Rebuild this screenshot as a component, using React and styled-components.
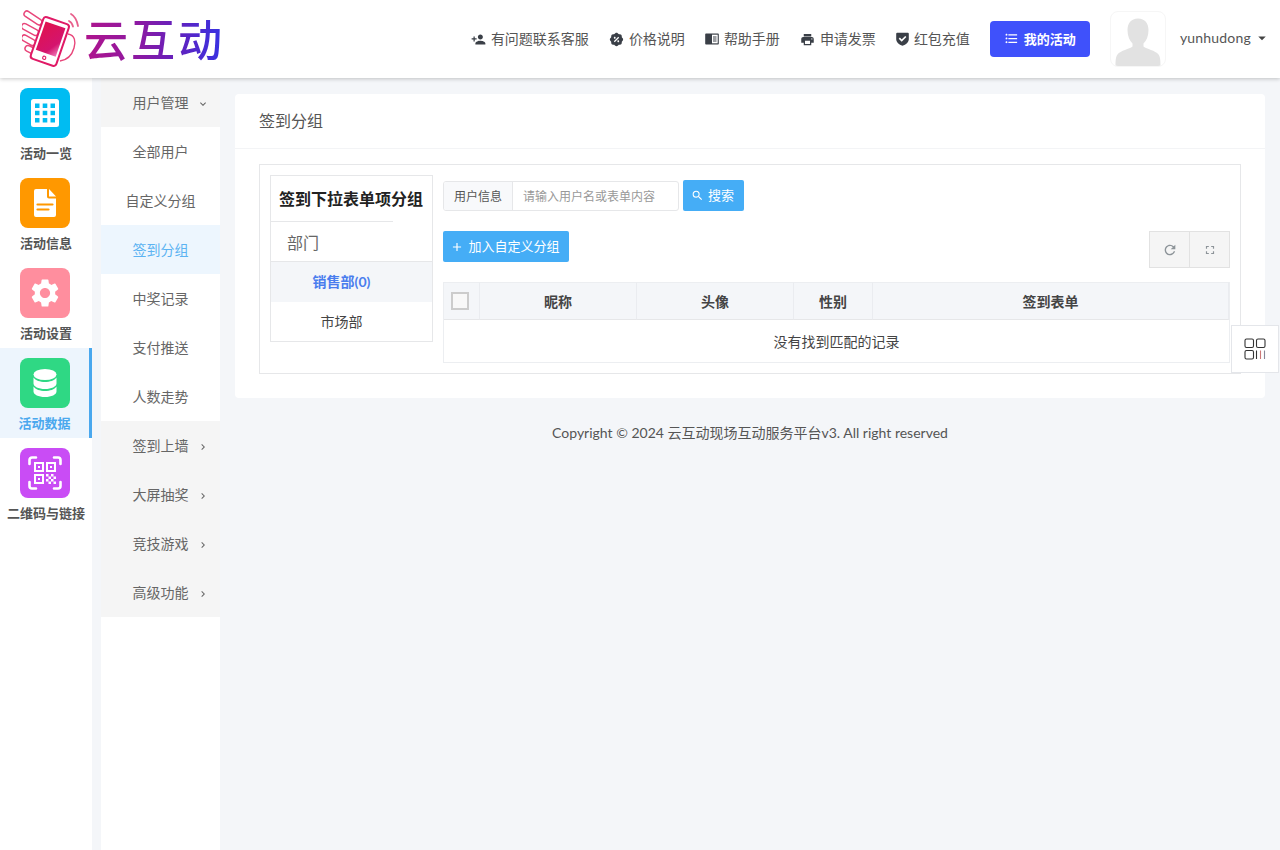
import React from "react";
import styled, { createGlobalStyle } from "styled-components";
import { MdPersonAdd, MdPrint, MdFormatListBulleted, MdSearch, MdRefresh, MdFullscreen, MdArrowDropDown, MdKeyboardArrowDown, MdKeyboardArrowRight, MdAdd, MdSettings } from "react-icons/md";
import { RiDiscountPercentFill } from "react-icons/ri";

const font = `Lato, "Noto Sans CJK SC", sans-serif`;
const Global = createGlobalStyle`
  html, body { margin: 0; padding: 0; background: #f4f6f9; height: 100%; }
  * { box-sizing: border-box; }
  body { font-family: ${font}; color: #555; font-size: 14px; overflow: hidden; }
`;
const Page = styled.div`width: 1280px; height: 850px; position: relative; display: flex; flex-direction: column; overflow: hidden;`;
const Header = styled.header`height: 78px; flex: none; background: #fff; display: flex; align-items: center; padding: 0 9px 0 22px; box-shadow: 0 1px 4px rgba(0,0,0,.22); position: relative; z-index: 2;`;
const Logo = styled.div`display: flex; align-items: center; gap: 4px; flex: none;`;
const LogoText = styled.span`
  font: 500 44px/50px "Noto Sans CJK SC", sans-serif; letter-spacing: 3px; display: block; width: 142px; white-space: nowrap;
  background: linear-gradient(90deg, #b0148c 0%, #8a1aa4 40%, #5f22c0 68%, #3434e6 100%);
  -webkit-background-clip: text; background-clip: text; color: transparent; transform: translateY(-1px);
`;
const HeaderNav = styled.nav`margin-left: auto; display: flex; align-items: center; gap: 20px;`;
const NavLink = styled.a`display: flex; align-items: center; gap: 5px; color: #555; font-size: 14px; line-height: 20px; white-space: nowrap; svg { flex: none; color: #3a3f47; }`;
const MyButton = styled.button`width: 100px; height: 36px; border: 0; border-radius: 4px; background: #3f51fb; color: #fff; font: 700 13px ${font}; display: flex; align-items: center; justify-content: center; gap: 5px; padding: 0 0 2px;`;
const Avatar = styled.div`width: 56px; height: 56px; border: 1px solid #f6f6f6; border-radius: 8px; background: #fff; overflow: hidden; display: flex;`;
const User = styled.div`display: flex; align-items: center; gap: 2px; margin-left: -6px; padding-bottom: 3px; font-size: 14px; color: #555; letter-spacing: .2px;`;

const Body = styled.div`flex: 1; display: flex; min-height: 0;`;
const Rail = styled.aside`width: 92px; flex: none; background: #fff; display: flex; flex-direction: column;`;
const RailItem = styled.div`
  height: 90px; padding: 10px ${p => p.$active ? "0 0 1px" : "2px 0 0"}; display: flex; flex-direction: column; align-items: center; gap: 5px;
  background: ${p => p.$active ? "#edf5fd" : "transparent"};
  border-right: ${p => p.$active ? "3px solid #4aa8ee" : "0"};
`;
const RailIcon = styled.div`width: 50px; height: 50px; border-radius: 8px; background: ${p => p.$color}; display: flex; align-items: center; justify-content: center; color: #fff; flex: none;`;
const RailLabel = styled.div`font-size: 13px; line-height: 20px; font-weight: 700; white-space: nowrap; margin-left: ${p => p.$active ? "-1px" : "2px"}; color: ${p => p.$active ? "#4aa8ee" : "#555"};`;
const SubMenu = styled.aside`width: 119px; flex: none; margin-left: 9px; background: #fff;`;
const SubGroup = styled.div`height: 49px; padding-bottom: 2px; background: #f5f5f5; display: flex; align-items: center; justify-content: center; position: relative; font-size: 14px; color: #666; svg { position: absolute; right: 11px; top: 20px; color: #666; }`;
const SubItem = styled.div`height: 49px; padding-bottom: 2px; display: flex; align-items: center; justify-content: center; font-size: 14px; color: ${p => p.$active ? "#5cb3f2" : "#666"}; background: ${p => p.$active ? "#edf6fe" : "#fff"};`;

const Main = styled.main`flex: 1; padding: 16px 15px 0 15px; min-width: 0;`;
const Card = styled.section`background: #fff; border-radius: 4px; height: 304px; display: flex; flex-direction: column;`;
const CardHead = styled.div`height: 55px; flex: none; padding: 0 24px 2px; display: flex; align-items: center; font-size: 16px; color: #555; border-bottom: 1px solid #f3f4f6;`;
const CardBody = styled.div`padding: 15px 24px 0;`;
const Frame = styled.div`height: 210px; border: 1px solid #e6e7e9; padding: 10px; display: flex; gap: 10px;`;
const GroupPanel = styled.div`width: 163px; height: 167px; flex: none; border: 1px solid #e6e7e9; display: flex; flex-direction: column;`;
const GroupTitle = styled.div`height: 46px; flex: none; padding: 0 8px 2px; display: flex; align-items: center; font-size: 16px; font-weight: 700; color: #222; white-space: nowrap; position: relative; &::after { content: ""; position: absolute; left: 0; bottom: 0; width: 122px; height: 1px; background: #e6e7e9; }`;
const GroupName = styled.div`height: 40px; flex: none; padding-left: 16px; display: flex; align-items: center; font-size: 16px; color: #666; border-bottom: 1px solid #e6e7e9;`;
const GroupRow = styled.div`height: 40px; flex: none; padding: 0 20px 2px 0; display: flex; align-items: center; justify-content: center; font-size: 14px; ${p => p.$active ? "background:#f4f6f9;color:#4a7dee;font-weight:700;" : "color:#444;"}`;

const Right = styled.div`flex: 1; min-width: 0; display: flex; flex-direction: column;`;
const SearchRow = styled.div`display: flex; align-items: center; gap: 4px; margin-top: 5px; height: 31px;`;
const InputGroup = styled.div`display: flex; width: 236px; height: 30px; border: 1px solid #e6e7e9; border-radius: 3px; overflow: hidden; font-size: 12px;`;
const Addon = styled.div`width: 69px; flex: none; background: #f8f9fb; border-right: 1px solid #e6e7e9; color: #555; display: flex; align-items: center; justify-content: center;`;
const Placeholder = styled.div`padding-left: 10px; color: #999; display: flex; align-items: center; white-space: nowrap;`;
const BlueButton = styled.button`height: 31px; border: 0; border-radius: 2px; background: #45adf6; color: #fff; font: 13px ${font}; display: flex; align-items: center; justify-content: center; gap: 4px; padding: 0 2px 2px 0; width: ${p => p.$w}px; flex: none; svg { margin-top: 2px; }`;
const ActionRow = styled.div`display: flex; align-items: flex-start; justify-content: space-between; margin-top: 20px; height: 51px;`;
const ToolGroup = styled.div`display: flex; height: 37px;`;
const ToolButton = styled.div`width: 41px; height: 37px; background: #f5f5f5; border: 1px solid #e2e2e2; margin-left: ${p => p.$joined ? "-1px" : 0}; display: flex; align-items: center; justify-content: center; color: #8d9499;`;
const Table = styled.div`border: 1px solid #eceef1; border-top: 0; display: grid; grid-template-columns: 36px 157px 157px 79px 1fr;`;
const Th = styled.div`height: 38px; background: #f4f6f9; border-right: 1px solid #eaecf0; border-bottom: 1px solid #e6e7e9; border-top: 1px solid #eceef1; display: flex; align-items: center; justify-content: center; font-size: 14px; font-weight: 700; color: #444; &:last-of-type { border-right: 0; }`;
const Check = styled.span`width: 18px; height: 18px; margin-right: 3px; border: 2px solid #ccc; background: #f8f8f8; display: block;`;
const Empty = styled.div`grid-column: 1 / -1; height: 42px; display: flex; align-items: center; justify-content: center; font-size: 14px; color: #444;`;
const Footer = styled.footer`margin-top: 24px; text-align: center; font-size: 14px; line-height: 22px; color: #555;`;
const Widget = styled.div`position: absolute; left: 1231px; top: 325px; width: 48px; height: 48px; background: #fff; border: 1px solid #e4e6ea; display: flex; align-items: center; justify-content: center; z-index: 3;`;

const fingers = "M5 4 17 12M2.500 16.500l11 6M2.500 28l8 4.500M6 38.500l4 2";
const Phone = () => (
  <svg width="58" height="58" viewBox="0 0 58 58" fill="none">
    <defs><linearGradient id="ph" x1="0" y1="0" x2="1" y2="1"><stop offset="0" stopColor="#e0124e"/><stop offset=".72" stopColor="#d4146e"/><stop offset="1" stopColor="#f07ab8"/></linearGradient></defs>
    <g strokeLinecap="round">
      <path d={fingers} stroke="#e8467a" strokeWidth="7.400"/>
      <path d={fingers} stroke="#fff" strokeWidth="4.400"/>
    </g>
    <path d="M46 24c7 1 8 8 6 14-2 7-7 12-14 13" stroke="#e8467a" strokeWidth="1.400"/>
    <g transform="rotate(19 28 31)">
      <rect x="14.500" y="9.500" width="27" height="44" rx="3" fill="#fff" stroke="#e01a66" strokeWidth="2"/>
      <rect x="17.500" y="14" width="21" height="30" fill="url(#ph)"/>
      <circle cx="28" cy="48.800" r="1.600" stroke="#e01a66" strokeWidth="1.100"/>
    </g>
    <path d="M47 11c2 1 3.500 3 4 5.500M49 4c3.500 2 6 6.500 7 12" stroke="#e8608c" strokeWidth="1.800" strokeLinecap="round"/>
  </svg>
);
const BookIcon = () => (
  <svg width="14" height="14" viewBox="0 0 14 14"><path d="M1 1.500h12a.8.8 0 0 1 .8.8v9.400a.8.8 0 0 1-.8.8H1a.8.8 0 0 1-.8-.8V2.300a.8.8 0 0 1 .8-.8z" fill="#3a3f47"/><rect x="7" y="2.700" width="5.700" height="8.600" fill="#fff"/><path d="M8 5h3.500M8 7h3.500M8 9h3.500" stroke="#3a3f47" strokeWidth="1"/></svg>
);
const ShieldIcon = () => (
  <svg width="13" height="14" viewBox="0 0 13 14"><path d="M1.200.8h10.600a1 1 0 0 1 1 1v5.400c0 3-2.800 5.300-6.300 6.500C3 12.500.2 10.200.2 7.200V1.800a1 1 0 0 1 1-1z" fill="#3a3f47"/><path d="M3.300 6.200 5.700 8.600 9.800 4.500" stroke="#fff" strokeWidth="1.700" fill="none"/></svg>
);
const Silhouette = () => (
  <svg width="54" height="54" viewBox="0 0 54 54"><path d="M27 6.500c7 0 10.500 5 10.500 11.500 0 6-2 10.500-5 13.500v3c3 2.500 12 4 15 8 1.500 2 2 5 2 11.500H4.500c0-6.500.5-9.500 2-11.500 3-4 12-5.500 15-8v-3c-3-3-5-7.500-5-13.500C16.500 11.500 20 6.500 27 6.500z" fill="#e2e2e2"/></svg>
);
const GridIcon = () => (
  <svg width="28" height="28" viewBox="0 0 28 28"><path fillRule="evenodd" fill="#fff" d="M2.500 0h23A2.500 2.500 0 0 1 28 2.500v23a2.500 2.500 0 0 1-2.500 2.500h-23A2.500 2.500 0 0 1 0 25.500v-23A2.500 2.500 0 0 1 2.500 0zM4 4.500v4.500h4.500V4.500zm7.700 0v4.500h4.600V4.500zm7.800 0v4.500H24V4.500zM4 11.700v4.600h4.500v-4.600zm7.700 0v4.600h4.600v-4.600zm7.800 0v4.600H24v-4.600zM4 19v4.500h4.500V19zm7.700 0v4.500h4.600V19zm7.800 0v4.500H24V19z"/></svg>
);
const DocIcon = () => (
  <svg width="22" height="28" viewBox="0 0 22 28"><path fill="#fff" d="M2 0h11v7.500c0 1 .8 2 2 2h7V26a2 2 0 0 1-2 2H2a2 2 0 0 1-2-2V2a2 2 0 0 1 2-2z"/><path fill="#fff" d="M15 0l7 7.500h-7z"/><path d="M3.500 15.500h15M3.500 20.500h11" stroke="#ff9800" strokeWidth="2.200" strokeLinecap="round"/></svg>
);
const DbIcon = () => (
  <svg width="24" height="28" viewBox="0 0 24 28"><ellipse cx="12" cy="5.500" rx="11.500" ry="5.500" fill="#fff"/><path fill="#fff" d="M.5 8.500c2 3 6.500 4.500 11.500 4.500s9.500-1.500 11.500-4.500v6c0 3-5 5.500-11.500 5.500S.5 17.500.5 14.500z"/><path fill="#fff" d="M.5 17.500c2 3 6.500 4.500 11.500 4.500s9.500-1.500 11.500-4.500v5c0 3-5 5.500-11.500 5.500S.5 25.500.5 22.500z"/></svg>
);
const QrIcon = () => (
  <svg width="34" height="34" viewBox="0 0 34 34" fill="none">
    <path d="M1.500 8V4a2.500 2.500 0 0 1 2.500-2.500h4M26 1.500h4A2.500 2.500 0 0 1 32.500 4v4M1.500 26v4A2.500 2.500 0 0 0 4 32.500h4M26 32.500h4a2.500 2.500 0 0 0 2.500-2.500v-4" stroke="#fff" strokeWidth="2.600" strokeLinecap="round"/>
    <path fillRule="evenodd" fill="#fff" d="M6 6h10v10H6zm2 2v6h6V8zm2 2h2v2h-2zM18 6h10v10H18zm2 2v6h6V8zm2 2h2v2h-2zM6 18h10v10H6zm2 2v6h6v-6zm2 2h2v2h-2zM18 18h2.500v2.500H18zM23 18h2.500v2.500H23zM20.500 20.500H23V23h-2.500zM25.500 20.500H28V23h-2.500zM18 23h2.500v2.500H18zM23 23h2.500v2.500H23zM20.500 25.500H23V28h-2.500zM25.500 25.500H28V28h-2.500z"/>
  </svg>
);
const WidgetIcon = () => (
  <svg width="22" height="22" viewBox="0 0 22 22" fill="none" stroke="#333" strokeWidth="1.100">
    <rect x="1" y="1" width="8.500" height="8.500" rx="1.500"/><rect x="12.500" y="1" width="8.500" height="8.500" rx="1.500"/><rect x="1" y="12.500" width="8.500" height="8.500" rx="1.500"/>
    <path d="M12.500 12.500v8.500" stroke="#333"/><path d="M16.500 12.500v8.500" stroke="#c77"/><path d="M20.500 12.500v8.500" stroke="#889"/>
  </svg>
);

const rail = [
  { label: "活动一览", color: "#00bcf2", icon: <GridIcon /> },
  { label: "活动信息", color: "#ff9800", icon: <DocIcon /> },
  { label: "活动设置", color: "#ff8e9e", icon: <MdSettings size={34} /> },
  { label: "活动数据", color: "#2fd884", icon: <DbIcon />, active: true },
  { label: "二维码与链接", color: "#c94cf5", icon: <QrIcon /> },
];
const sub = ["全部用户", "自定义分组", "签到分组", "中奖记录", "支付推送", "人数走势"];
const groups = ["签到上墙", "大屏抽奖", "竞技游戏", "高级功能"];

export default function App() {
  return (
    <Page>
      <Global />
      <Header>
        <Logo><Phone /><LogoText>云互动</LogoText></Logo>
        <HeaderNav>
          <NavLink><MdPersonAdd size={15} />有问题联系客服</NavLink>
          <NavLink><RiDiscountPercentFill size={15} />价格说明</NavLink>
          <NavLink><BookIcon />帮助手册</NavLink>
          <NavLink><MdPrint size={15} />申请发票</NavLink>
          <NavLink><ShieldIcon />红包充值</NavLink>
          <MyButton><MdFormatListBulleted size={15} />我的活动</MyButton>
          <Avatar><Silhouette /></Avatar>
          <User>yunhudong<MdArrowDropDown size={18} color="#444" /></User>
        </HeaderNav>
      </Header>
      <Body>
        <Rail>
          {rail.map(r => (
            <RailItem key={r.label} $active={r.active}>
              <RailIcon $color={r.color}>{r.icon}</RailIcon>
              <RailLabel $active={r.active}>{r.label}</RailLabel>
            </RailItem>
          ))}
        </Rail>
        <SubMenu>
          <SubGroup>用户管理<MdKeyboardArrowDown size={12} /></SubGroup>
          {sub.map(s => <SubItem key={s} $active={s === "签到分组"}>{s}</SubItem>)}
          {groups.map(g => <SubGroup key={g}>{g}<MdKeyboardArrowRight size={12} /></SubGroup>)}
        </SubMenu>
        <Main>
          <Card>
            <CardHead>签到分组</CardHead>
            <CardBody>
              <Frame>
                <GroupPanel>
                  <GroupTitle>签到下拉表单项分组</GroupTitle>
                  <GroupName>部门</GroupName>
                  <GroupRow $active>销售部(0)</GroupRow>
                  <GroupRow>市场部</GroupRow>
                </GroupPanel>
                <Right>
                  <SearchRow>
                    <InputGroup>
                      <Addon>用户信息</Addon>
                      <Placeholder>请输入用户名或表单内容</Placeholder>
                    </InputGroup>
                    <BlueButton $w={61}><MdSearch size={13} />搜索</BlueButton>
                  </SearchRow>
                  <ActionRow>
                    <BlueButton $w={126}><MdAdd size={14} />加入自定义分组</BlueButton>
                    <ToolGroup>
                      <ToolButton><MdRefresh size={16} /></ToolButton>
                      <ToolButton $joined><MdFullscreen size={14} /></ToolButton>
                    </ToolGroup>
                  </ActionRow>
                  <Table>
                    <Th><Check /></Th>
                    <Th>昵称</Th>
                    <Th>头像</Th>
                    <Th>性别</Th>
                    <Th>签到表单</Th>
                    <Empty>没有找到匹配的记录</Empty>
                  </Table>
                </Right>
              </Frame>
            </CardBody>
          </Card>
          <Footer>Copyright © 2024 云互动现场互动服务平台v3. All right reserved</Footer>
        </Main>
      </Body>
      <Widget><WidgetIcon /></Widget>
    </Page>
  );
}
